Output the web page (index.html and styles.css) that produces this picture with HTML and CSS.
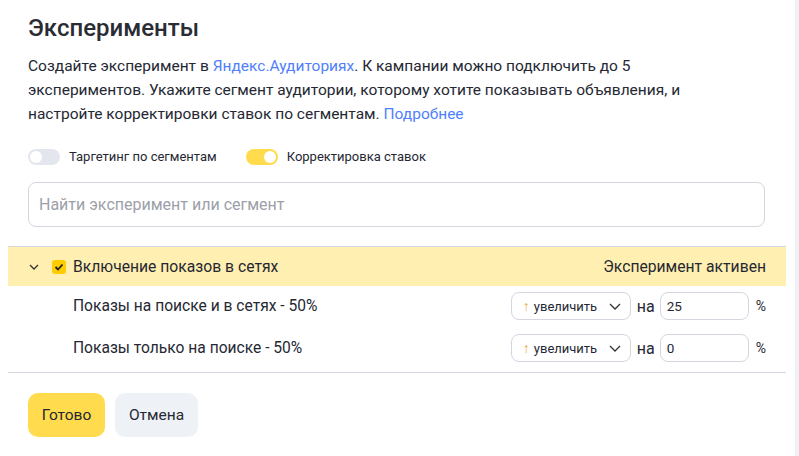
FILE: index.html
```html
<!DOCTYPE html>
<html lang="ru">
<head>
<meta charset="utf-8">
<link rel="stylesheet" href="styles.css">
</head>
<body>
<div class="page">
  <div class="panel">
    <h1 class="title">Эксперименты</h1>
    <p class="desc">Создайте эксперимент в <a class="link">Яндекс.Аудиториях</a>. К кампании можно подключить до 5 экспериментов. Укажите сегмент аудитории, которому хотите показывать объявления, и настройте корректировки ставок по сегментам. <a class="link">Подробнее</a></p>
    <div class="toggles">
      <label class="toggle"><span class="track"><span class="knob"></span></span>Таргетинг по сегментам</label>
      <label class="toggle on"><span class="track"><span class="knob"></span></span>Корректировка ставок</label>
    </div>
    <div class="search">Найти эксперимент или сегмент</div>
    <div class="list">
      <div class="group">
        <svg class="chev" width="10" height="6" viewBox="0 0 10 6"><path d="M1 1l4 4 4-4" fill="none" stroke="#333" stroke-width="1.3"/></svg>
        <span class="check"><svg width="10" height="8" viewBox="0 0 10 8"><path d="M1.5 4l2.5 2.5 4.5-5" fill="none" stroke="#222" stroke-width="1.8"/></svg></span>
        <span class="group-name">Включение показов в сетях</span>
        <span class="status">Эксперимент активен</span>
      </div>
      <div class="row">
        <span class="row-name">Показы на поиске и в сетях - 50%</span>
        <div class="select"><span class="arrow">↑</span>увеличить<svg class="sel-chev" width="12" height="7" viewBox="0 0 12 7"><path d="M1 1l5 5 5-5" fill="none" stroke="#333" stroke-width="1.3"/></svg></div>
        <span class="na">на</span>
        <div class="num">25</div>
        <span class="pct">%</span>
      </div>
      <div class="row">
        <span class="row-name">Показы только на поиске - 50%</span>
        <div class="select"><span class="arrow">↑</span>увеличить<svg class="sel-chev" width="12" height="7" viewBox="0 0 12 7"><path d="M1 1l5 5 5-5" fill="none" stroke="#333" stroke-width="1.3"/></svg></div>
        <span class="na">на</span>
        <div class="num">0</div>
        <span class="pct">%</span>
      </div>
    </div>
    <div class="actions">
      <button class="btn primary">Готово</button>
      <button class="btn secondary">Отмена</button>
    </div>
  </div>
  <div class="scroll"></div>
</div>
</body>
</html>
```
FILE: styles.css
```css
* { box-sizing: border-box; }
html, body { margin: 0; padding: 0; background: #fff; }
body {
  font-family: Roboto, "Noto Sans", sans-serif;
  color: #252833;
  width: 799px;
  height: 456px;
  overflow: hidden;
}
.page {
  display: flex;
  height: 456px;
}
.panel {
  width: 778px;
  margin-left: 8px;
}
.scroll {
  margin-left: 9px;
  width: 4px;
  background: #eef1f6;
  height: 456px;
}
.title {
  margin: 0;
  padding: 13px 0 0 20px;
  font-size: 24px;
  font-weight: 500;
  line-height: 30px;
  color: #2a2c35;
}
.desc {
  margin: 11px 0 0 20px;
  font-size: 15.5px;
  line-height: 24px;
  width: 695px;
}
.link { color: #5080fb; }
.toggles {
  display: flex;
  margin: 22px 0 0 20px;
  height: 17px;
  align-items: center;
}
.toggle {
  display: flex;
  align-items: center;
  font-size: 13px;
  margin-right: 29px;
}
.track {
  width: 32px;
  height: 16px;
  border-radius: 8px;
  background: #e4e6ee;
  margin-right: 9px;
  position: relative;
}
.knob {
  position: absolute;
  top: 2px;
  left: 2px;
  width: 12px;
  height: 12px;
  border-radius: 50%;
  background: #fff;
}
.toggle.on .track { background: #ffdb4d; }
.toggle.on .knob { left: 18px; }
.search {
  margin: 17px 0 0 20px;
  width: 737px;
  height: 45px;
  border: 1px solid #d4d7df;
  border-radius: 8px;
  font-size: 16px;
  color: #9ca0a9;
  padding: 0 10px;
  display: flex;
  align-items: center;
}
.list {
  margin-top: 19px;
  border-top: 1px solid #d5d8e0;
  border-bottom: 1px solid #d5d8e0;
  padding-bottom: 3px;
}
.group {
  height: 39px;
  background: #ffefb0;
  display: flex;
  align-items: center;
  padding: 0 20px 0 21px;
  font-size: 15.7px;
}
.chev { margin-right: 13px; }
.check {
  width: 14px;
  height: 14px;
  border-radius: 3px;
  background: #ffcc00;
  display: flex;
  align-items: center;
  justify-content: center;
  margin-right: 7px;
}
.group-name { flex: 1; }
.row {
  display: flex;
  align-items: center;
  height: 42px;
  padding: 0 20px 0 65px;
  font-size: 15.6px;
}
.group + .row { margin-top: -1px; }
.row-name { flex: 1; }
.select {
  width: 120px;
  height: 28px;
  border: 1px solid #d4d7df;
  border-radius: 8px;
  display: flex;
  align-items: center;
  font-size: 13px;
  padding: 0 0 0 11px;
}
.arrow { color: #e8a93a; margin-right: 4px; font-size: 14px; }
.sel-chev { margin-left: 12px; }
.na { margin: 0 5px 0 6px; font-size: 16px; }
.num {
  width: 89px;
  height: 28px;
  border: 1px solid #d4d7df;
  border-radius: 8px;
  font-size: 13.5px;
  display: flex;
  align-items: center;
  padding-left: 6px;
}
.pct { margin-left: 7px; font-size: 14px; }
.actions {
  display: flex;
  gap: 10px;
  margin: 20px 0 0 20px;
}
.btn {
  font-family: inherit;
  font-size: 15.5px;
  color: #252833;
  border: none;
  border-radius: 10px;
  height: 44px;
  padding: 0 12px;
}
.primary { background: #ffdb4d; width: 77px; }
.secondary { background: #eef1f6; width: 83px; }
```
